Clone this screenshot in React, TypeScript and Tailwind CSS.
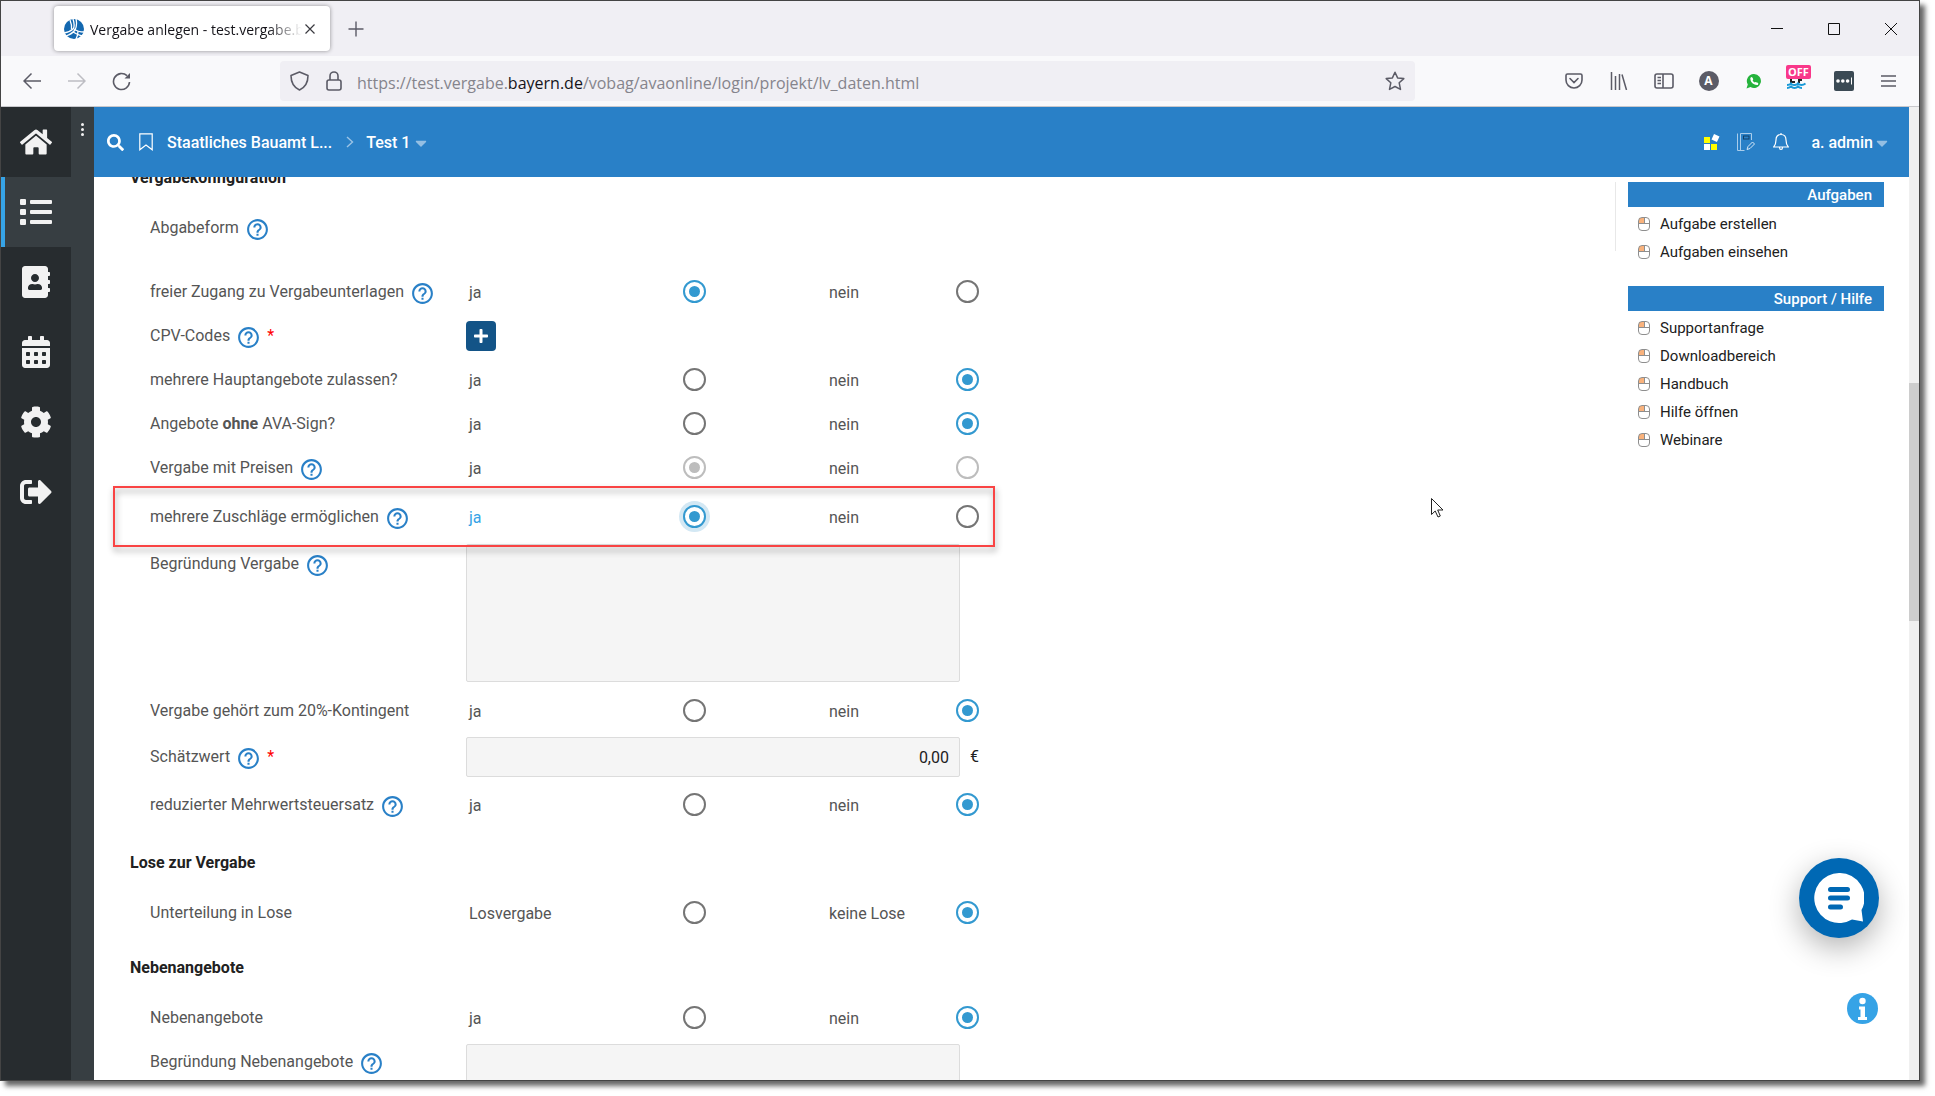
import * as React from "react"
import {
  FaAddressBook,
  FaCalendarAlt,
  FaCaretDown,
  FaCog,
  FaHome,
  FaList,
  FaPlus,
  FaSearch,
  FaSignOutAlt,
} from "react-icons/fa"
import { MdHelpOutline } from "react-icons/md"

const NAV_ITEMS = [
  { id: "home", name: "Startseite", icon: FaHome },
  { id: "list", name: "Projekte", icon: FaList, active: true },
  { id: "contacts", name: "Kontakte", icon: FaAddressBook },
  { id: "calendar", name: "Kalender", icon: FaCalendarAlt },
  { id: "settings", name: "Einstellungen", icon: FaCog },
  { id: "logout", name: "Abmelden", icon: FaSignOutAlt },
]

const SIDE_MENUS = [
  { title: "Aufgaben", items: ["Aufgabe erstellen", "Aufgaben einsehen"] },
  {
    title: "Support / Hilfe",
    items: ["Supportanfrage", "Downloadbereich", "Handbuch", "Hilfe öffnen", "Webinare"],
  },
]

export default function App() {
  return (
    <div className="h-screen overflow-hidden bg-white pr-[15px] pb-[15px] font-[Roboto,sans-serif]">
      <div className="flex h-full flex-col border border-[#444] bg-white shadow-[5px_5px_5px_rgba(0,0,0,0.6)]">
        <TabBar />
        <Toolbar />
        <div className="flex min-h-0 flex-1">
          <SideNav />
          <div className="relative flex min-w-0 flex-1 flex-col">
            <AppHeader />
            <div className="flex min-h-0 flex-1 overflow-hidden">
              <main className="min-w-0 flex-1 pl-9">
                <VergabeForm />
              </main>
              <SideMenus />
            </div>
            <Cursor />
            <button aria-label="Chat" className="absolute right-[30px] bottom-[142px] flex size-20 items-center justify-center rounded-full bg-[#0068b4] shadow-[0_10px_30px_rgba(0,0,0,0.3)]">
              <svg width="50" height="50" viewBox="0 0 50 50">
                <path fill="#fff" d="M25 0a25 25 0 1 0 13 46.500L49 48.500 47.500 37A25 25 0 0 0 25 0z" />
                <path stroke="#0068b4" strokeWidth="5" strokeLinecap="round" d="M16.500 16.500h17M16.500 25h17M16.500 34h10" />
              </svg>
            </button>
            <button aria-label="Info" className="absolute right-[31px] bottom-14 size-[31px]">
              <svg width="31" height="31" viewBox="0 0 31 31">
                <circle cx="15.500" cy="15.500" r="15.500" fill="#36a3e6" />
                <circle cx="15.500" cy="8" r="3.200" fill="#fff" />
                <path fill="#fff" d="M12 13.500h6v10.500h2v3h-9v-3h2.500v-7.500H12z" />
              </svg>
            </button>
          </div>
          <div className="flex w-2.5 flex-col bg-[#f0f0f0] pt-[276px]">
            <div className="h-[238px] bg-[#cdcdcd]" />
          </div>
        </div>
      </div>
    </div>
  )
}

function TabBar() {
  return (
    <div className="flex h-[55px] shrink-0 items-center bg-[#f0eff4] pl-[53px] font-['Open_Sans',sans-serif]">
      <div className="flex h-[45px] w-[276px] items-center rounded bg-white pl-2.5 shadow-[0_0_4px_rgba(0,0,0,0.4)]">
        <svg width="20" height="20" viewBox="0 0 20 20">
          <circle cx="10" cy="10" r="10" fill="#1368b0" />
          <g fill="none" stroke="#fff" strokeWidth="1.300">
            <path d="M9 0Q11 6 9.500 9.500Q6 13 0 14" />
            <path d="M12 0Q13.500 6 11 11Q8 15 2 17" />
            <path d="M10 10Q14 13 20 13" />
            <path d="M9 13Q14 16 18 17" />
            <path d="M6 1Q8 6 7.500 10" />
            <path d="M14 12Q14 17 12 20" />
          </g>
        </svg>
        <span className="ml-1.5 w-[212px] overflow-hidden pt-0.5 text-sm whitespace-nowrap text-[#15141a] mask-[linear-gradient(to_right,black_84%,transparent)]">
          Vergabe anlegen - test.vergabe.bayern.de
        </span>
        <button aria-label="Tab schließen" className="ml-0.5">
          <svg width="12" height="12" viewBox="0 0 12 12" stroke="#3a3a40" strokeWidth="1.200">
            <path d="M1.500 1.500l9 9M10.500 1.500l-9 9" />
          </svg>
        </button>
      </div>
      <button aria-label="Neuer Tab" className="ml-[18px]">
        <svg width="16" height="16" viewBox="0 0 16 16" stroke="#5b5b66" strokeWidth="1.400">
          <path d="M8 .5v15M.5 8h15" />
        </svg>
      </button>
      <div className="ml-auto flex">
        <WindowButton label="Minimieren">
          <path d="M0 5.500h12" />
        </WindowButton>
        <WindowButton label="Maximieren">
          <path d="M.5.5h11v11H.5z" />
        </WindowButton>
        <WindowButton label="Schließen">
          <path d="M0 0l12 12M12 0L0 12" />
        </WindowButton>
      </div>
    </div>
  )
}

function WindowButton({ label, children }: { label: string; children: React.ReactNode }) {
  return (
    <button aria-label={label} className="flex h-11 w-[57px] items-center justify-center">
      <svg width="12" height="12" viewBox="0 0 12 12" fill="none" stroke="#111" className="overflow-visible">
        {children}
      </svg>
    </button>
  )
}

function ToolButton({ label, children }: { label: string; children: React.ReactNode }) {
  return (
    <button aria-label={label} className="flex h-10 w-[45px] shrink-0 items-center justify-center">
      {children}
    </button>
  )
}

function Toolbar() {
  return (
    <div className="flex h-[51px] shrink-0 items-center border-b border-[#c8c8cc] bg-[#f9f9fb] px-2">
      <ToolButton label="Zurück">
        <svg width="18" height="18" viewBox="0 0 18 18" fill="none" stroke="#5b5b66" strokeWidth="1.500">
          <path d="M18 9H1M8.500 1.500L1 9l7.500 7.500" />
        </svg>
      </ToolButton>
      <ToolButton label="Vor">
        <svg width="18" height="18" viewBox="0 0 18 18" fill="none" stroke="#bdbdc3" strokeWidth="1.500">
          <path d="M0 9h17M9.500 1.500L17 9l-7.500 7.500" />
        </svg>
      </ToolButton>
      <ToolButton label="Neu laden">
        <svg width="19" height="19" viewBox="0 0 19 19" fill="none" stroke="#5b5b66" strokeWidth="1.600">
          <path d="M17.500 10a8 8 0 1 1-2.500-6.300" />
          <path d="M18 1v5.500h-5.500z" fill="#5b5b66" stroke="none" />
        </svg>
      </ToolButton>
      <div className="mx-[136px] flex h-10 min-w-0 flex-1 items-center rounded bg-[#f0eff4] pr-2.5 pl-2.5">
        <svg width="19" height="20" viewBox="0 0 19 20" fill="none" stroke="#5b5b66" strokeWidth="1.600" strokeLinejoin="round">
          <path d="M9.500 1L18 4.500c0 7-3 12-8.500 14.500C4 16.500 1 11.500 1 4.500z" />
        </svg>
        <svg width="16" height="20" viewBox="0 0 16 20" fill="none" stroke="#5b5b66" strokeWidth="1.600" className="ml-[17px]">
          <rect x="1" y="9" width="14" height="10" rx="2" />
          <path d="M4 9V5a4 4 0 0 1 8 0v4" />
        </svg>
        <div role="textbox" aria-label="Adresse" className="ml-[15px] flex-1 truncate pt-1 font-['Open_Sans',sans-serif] text-base text-[#85848c]">
          https://test.vergabe.<span className="text-[#15141a]">bayern.de</span>/vobag/avaonline/login/projekt/lv_daten.html
        </div>
        <button aria-label="Lesezeichen">
          <svg width="20" height="20" viewBox="0 0 20 20" fill="none" stroke="#5b5b66" strokeWidth="1.500" strokeLinejoin="round">
            <path d="M10 1.200l2.600 5.700 6.200.7-4.600 4.200 1.300 6.600L10 15.500l-5.500 2.900 1.300-6.600L1.200 7.600l6.200-.7z" />
          </svg>
        </button>
      </div>
      <ToolButton label="Pocket">
        <svg width="18" height="16" viewBox="0 0 18 16" fill="none" stroke="#5b5b66" strokeWidth="1.600" strokeLinecap="round">
          <path d="M2.500 1h13Q17 1 17 2.500V7a8 8 0 0 1-16 0V2.500Q1 1 2.500 1z" />
          <path d="M5 5.500l4 4 4-4" />
        </svg>
      </ToolButton>
      <ToolButton label="Bibliothek">
        <svg width="18" height="18" viewBox="0 0 18 18" stroke="#5b5b66" strokeWidth="1.500">
          <path d="M1.500 0v18M5.500 4v14M9.500 2v16M12 2.500L16.500 18" />
        </svg>
      </ToolButton>
      <ToolButton label="Sidebar">
        <svg width="20" height="16" viewBox="0 0 20 16" fill="none" stroke="#5b5b66" strokeWidth="1.600">
          <rect x="1" y="1" width="18" height="14" rx="2" />
          <path d="M9 1v14M3.500 4.500H7M3.500 7.500H7M3.500 10.500H7" />
        </svg>
      </ToolButton>
      <ToolButton label="Konto">
        <span className="flex size-5 items-center justify-center rounded-full bg-[#5b5b66] font-['Open_Sans',sans-serif] text-xs font-bold text-white">
          A
        </span>
      </ToolButton>
      <ToolButton label="WhatsApp">
        <svg width="15" height="15" viewBox="0 0 15 15">
          <path fill="#25b33c" d="M8 0a7 7 0 1 1-3.500 13.100L.5 14.500l1.300-4A7 7 0 0 1 8 0z" />
          <path fill="none" stroke="#fff" strokeWidth="1.800" strokeLinecap="round" d="M5.500 4.500q-.5 2.500 1.800 4.200t4 1.100" />
          <path fill="none" stroke="#fff" strokeWidth="2.200" strokeLinecap="round" d="M5.600 4.300l.5 1.200M9.700 9.200l1.400.6" />
        </svg>
      </ToolButton>
      <ToolButton label="Erweiterung">
        <span className="mb-2 flex h-6 w-[25px] flex-col">
          <span className="flex h-3.5 shrink-0 items-center justify-center rounded-xs bg-[#f9388a] font-['Open_Sans',sans-serif] text-[11px] leading-3.5 font-bold text-white">
            OFF
          </span>
          <svg width="25" height="10" viewBox="0 0 25 10" fill="none">
            <path stroke="#222" strokeWidth="2" d="M5 0v3h4M13 0v4M13 1h3" />
            <path stroke="#1a9ad7" strokeWidth="2" d="M1 6q3 0 4-1.500 1.500 2 4 1.500t3-1.500q1.500 1.500 3.500 1.500t4-1.500M1 9q2 0 4-1.500 1.500 1.500 3.500 1.500t3.500-1.500q1.500 1.500 4 1.500" />
          </svg>
        </span>
      </ToolButton>
      <ToolButton label="Passwörter">
        <svg width="20" height="20" viewBox="0 0 20 20">
          <rect width="20" height="20" rx="2" fill="#3b4a54" />
          <g fill="#fff">
            <circle cx="4" cy="10" r="1.800" />
            <circle cx="8.800" cy="10" r="1.800" />
            <circle cx="13.600" cy="10" r="1.800" />
            <rect x="17" y="6.500" width="1" height="7" />
          </g>
        </svg>
      </ToolButton>
      <ToolButton label="Menü">
        <svg width="15" height="12" viewBox="0 0 15 12" stroke="#5b5b66" strokeWidth="1.500">
          <path d="M0 1h15M0 6h15M0 11h15" />
        </svg>
      </ToolButton>
    </div>
  )
}

function SideNav() {
  return (
    <div className="flex w-[93px] shrink-0 bg-[#373e42]">
      <nav className="w-[70px] bg-[#272c2f]">
        {NAV_ITEMS.map(nav => (
          <a
            key={nav.id}
            href="#"
            aria-label={nav.name}
            onClick={e => e.preventDefault()}
            className={`flex h-[70px] items-center justify-center text-[#f2f2f2] ${
              nav.active ? "border-l-4 border-[#36a3e6] bg-[#373e42] pr-1" : ""
            }`}
          >
            <nav.icon size={32} />
          </a>
        ))}
      </nav>
      <button aria-label="Mehr" className="mx-auto flex h-11 flex-col items-center justify-center gap-0.5">
        <span className="size-[3px] rounded-full bg-[#f2f2f2]" />
        <span className="size-[3px] rounded-full bg-[#f2f2f2]" />
        <span className="size-[3px] rounded-full bg-[#f2f2f2]" />
      </button>
    </div>
  )
}

function AppHeader() {
  return (
    <header className="flex h-[70px] shrink-0 items-center bg-[#2980c7] pr-[18px] pl-[13px] text-base font-medium text-white">
      <button aria-label="Suche">
        <FaSearch size={17} />
      </button>
      <button aria-label="Merken" className="ml-[15px]">
        <svg width="14" height="18" viewBox="0 0 14 18" fill="none" stroke="#fff" strokeWidth="1.200">
          <path d="M.8.8h12.400v16L7 12 .8 16.800z" />
        </svg>
      </button>
      <a href="#" className="ml-3.5 pt-0.5">Staatliches Bauamt L...</a>
      <svg width="8" height="12" viewBox="0 0 8 12" fill="none" stroke="#9cc4e6" strokeWidth="1.400" className="ml-3.5">
        <path d="M1 1l5.500 5L1 11" />
      </svg>
      <button className="ml-3 flex items-center gap-0.5 pt-0.5">
        Test 1
        <FaCaretDown size={18} className="text-[#94bfe3]" />
      </button>
      <div className="ml-auto flex items-center">
        <button aria-label="Module">
          <svg width="16" height="16" viewBox="0 0 16 16">
            <rect x="0" y="3" width="6" height="6" fill="#ff0" />
            <rect x="0" y="10" width="6" height="6" fill="#fff" />
            <rect x="7" y="10" width="6" height="6" fill="#ff0" />
            <rect x="8.500" y="1" width="6" height="6" fill="#fff" transform="rotate(25 11.500 4)" />
          </svg>
        </button>
        <button aria-label="Notizen" className="ml-[17px]">
          <svg width="18" height="18" viewBox="0 0 18 18" fill="none" stroke="#a9cdeb" strokeWidth="1">
            <path d="M.5.5v17h7M3.500.5v17M3.500.5h11V7" />
            <rect x="6.500" y="3" width="5.500" height="3" stroke="#123f66" />
            <path d="M10 16.500l1-3 4.500-4.500 2 2-4.500 4.500z" stroke="#d5e7f6" />
          </svg>
        </button>
        <button aria-label="Benachrichtigungen" className="ml-[18px]">
          <svg width="16" height="18" viewBox="0 0 16 18" fill="none" stroke="#fff" strokeWidth="1.200">
            <path d="M8 1.500c-3.500 0-5 2.500-5 5.500 0 4-1 5.500-2.300 7h14.600C14 12.500 13 11 13 7c0-3-1.500-5.500-5-5.500zM8 0v1.500M6.500 14.500a1.500 2 0 0 0 3 0" />
          </svg>
        </button>
        <button className="ml-[22px] flex items-center pt-0.5">
          a. admin
          <FaCaretDown size={18} className="text-[#94bfe3]" />
        </button>
      </div>
    </header>
  )
}

interface FieldLabelProps {
  children: React.ReactNode
  help?: boolean
  required?: boolean
  htmlFor?: string
}

function FieldLabel({ children, help, required, htmlFor }: FieldLabelProps) {
  return (
    <div className="flex w-[316px] shrink-0 items-center">
      <label htmlFor={htmlFor}>{children}</label>
      {help && (
        <button type="button" aria-label="Hilfe" className="mt-[3px] ml-1.5 text-[#2980c7]">
          <MdHelpOutline size={25} />
        </button>
      )}
      {required && <span className="ml-1.5 text-[#f00]">*</span>}
    </div>
  )
}

interface RadioRowProps {
  name: string
  label: React.ReactNode
  value: "a" | "b"
  options?: [string, string]
  help?: boolean
  disabled?: boolean
  focused?: boolean
  className?: string
}

const radioClass =
  "mb-0.5 size-[23px] shrink-0 appearance-none rounded-full border-2 border-[#757575] p-1 checked:border-[#3399d0] checked:bg-[#3399d0] checked:bg-clip-content disabled:border-[#bdbdbd] disabled:checked:bg-[#bdbdbd]"

function RadioRow({ name, label, value, options = ["ja", "nein"], help, disabled, focused, className = "h-11" }: RadioRowProps) {
  return (
    <div className={`relative flex items-center ${className}`}>
      <FieldLabel help={help}>{label}</FieldLabel>
      <label htmlFor={`${name}-a`} className={`w-[217px] pt-0.5 pl-[3px] ${focused ? "text-[#36a3e6]" : ""}`}>
        {options[0]}
      </label>
      <input
        type="radio"
        id={`${name}-a`}
        name={name}
        defaultChecked={value === "a"}
        disabled={disabled}
        className={`${radioClass} ${focused ? "shadow-[0_0_0_4px_#d3e8f4]" : ""}`}
      />
      <label htmlFor={`${name}-b`} className="ml-[123px] w-[127px] pt-0.5">{options[1]}</label>
      <input
        type="radio"
        id={`${name}-b`}
        name={name}
        defaultChecked={value === "b"}
        disabled={disabled}
        className={radioClass}
      />
      {focused && (
        <div className="pointer-events-none absolute -top-1 -bottom-[3px] -left-[37px] w-[882px] border-2 border-[#f94444] drop-shadow-[1px_4px_3px_rgba(0,0,0,0.4)]" />
      )}
    </div>
  )
}

const fieldClass = "w-[494px] resize-none rounded-xs border border-[#dcdcdc] bg-[#f5f5f5] px-2.5 text-[#212121]"

function VergabeForm() {
  return (
    <form className="-mt-[11px] text-base text-[#555]" onSubmit={e => e.preventDefault()}>
      <h2 className="h-6 font-bold text-[#212121]">Vergabekonfiguration</h2>
      <div className="pt-[18px] pl-5">
        <div className="mb-[22px] flex h-10 items-center">
          <FieldLabel help>Abgabeform</FieldLabel>
        </div>
        <RadioRow name="zugang" label="freier Zugang zu Vergabeunterlagen" value="a" help />
        <div className="flex h-11 items-center">
          <FieldLabel help required>CPV-Codes</FieldLabel>
          <button type="button" aria-label="CPV-Code hinzufügen" className="flex size-[30px] items-center justify-center rounded bg-[#135487] text-white">
            <FaPlus size={16} />
          </button>
        </div>
        <RadioRow name="hauptangebote" label="mehrere Hauptangebote zulassen?" value="b" />
        <RadioRow name="avasign" label={<>Angebote <b>ohne</b> AVA-Sign?</>} value="b" />
        <RadioRow name="preise" label="Vergabe mit Preisen" value="a" help disabled />
        <RadioRow name="zuschlaege" label="mehrere Zuschläge ermöglichen" value="a" help focused className="z-10 h-[54px]" />
        <div className="mb-[7px] flex items-start">
          <div className="flex h-10 items-center">
            <FieldLabel help htmlFor="begruendung">Begründung Vergabe</FieldLabel>
          </div>
          <textarea id="begruendung" disabled className={`h-[138px] ${fieldClass}`} />
        </div>
        <RadioRow name="kontingent" label="Vergabe gehört zum 20%-Kontingent" value="b" />
        <div className="flex h-12 items-center">
          <FieldLabel help required htmlFor="schaetzwert">Schätzwert</FieldLabel>
          <input id="schaetzwert" defaultValue="0,00" className={`h-10 text-right ${fieldClass}`} />
          <span className="ml-2.5 text-[#212121]">€</span>
        </div>
        <RadioRow name="mwst" label="reduzierter Mehrwertsteuersatz" value="b" help className="h-12" />
      </div>
      <h2 className="mt-[22px] h-6 font-bold text-[#212121]">Lose zur Vergabe</h2>
      <div className="pt-4 pl-5">
        <RadioRow name="lose" label="Unterteilung in Lose" value="b" options={["Losvergabe", "keine Lose"]} />
      </div>
      <h2 className="mt-[21px] h-6 font-bold text-[#212121]">Nebenangebote</h2>
      <div className="pt-4 pl-5">
        <RadioRow name="nebenangebote" label="Nebenangebote" value="b" />
        <div className="mt-1 flex items-start">
          <div className="flex h-9 items-center">
            <FieldLabel help htmlFor="begruendung-neben">Begründung Nebenangebote</FieldLabel>
          </div>
          <textarea id="begruendung-neben" disabled className={`h-[138px] ${fieldClass}`} />
        </div>
      </div>
    </form>
  )
}

function SideMenus() {
  return (
    <aside className="flex shrink-0 items-start pt-[5px] pr-[25px]">
      <div className="mr-3 h-[69px] w-px bg-[#e8e8e8]" />
      <div className="flex w-64 flex-col gap-5 text-[15px]">
        {SIDE_MENUS.map(menu => (
          <section key={menu.title}>
            <h3 className="h-[25px] bg-[#2980c7] pr-3 text-right leading-[27px] font-medium text-white">{menu.title}</h3>
            <ul className="pt-[3px]">
              {menu.items.map(item => (
                <li key={item}>
                  <a href="#" className="flex h-7 items-center gap-2.5 pl-2.5 text-[#212121]">
                    <MouseIcon />
                    {item}
                  </a>
                </li>
              ))}
            </ul>
          </section>
        ))}
      </div>
    </aside>
  )
}

function MouseIcon() {
  return (
    <svg width="12" height="14" viewBox="0 0 12 14" fill="none" stroke="#8e8e8e">
      <path d="M1 1h5v5H1z" fill="#f9b27c" stroke="none" />
      <rect x=".5" y=".5" width="11" height="13" rx="3.500" />
      <path d="M.5 6.500h11M6.500.5v6" />
    </svg>
  )
}

function Cursor() {
  return (
    <svg width="13" height="20" viewBox="0 0 13 20" fill="#fff" stroke="#222" className="pointer-events-none absolute top-[391px] left-[1337px]">
      <path d="M.5.5v16l3.700-3.500 2.800 6 2.300-1-2.600-6h5.300z" />
    </svg>
  )
}
